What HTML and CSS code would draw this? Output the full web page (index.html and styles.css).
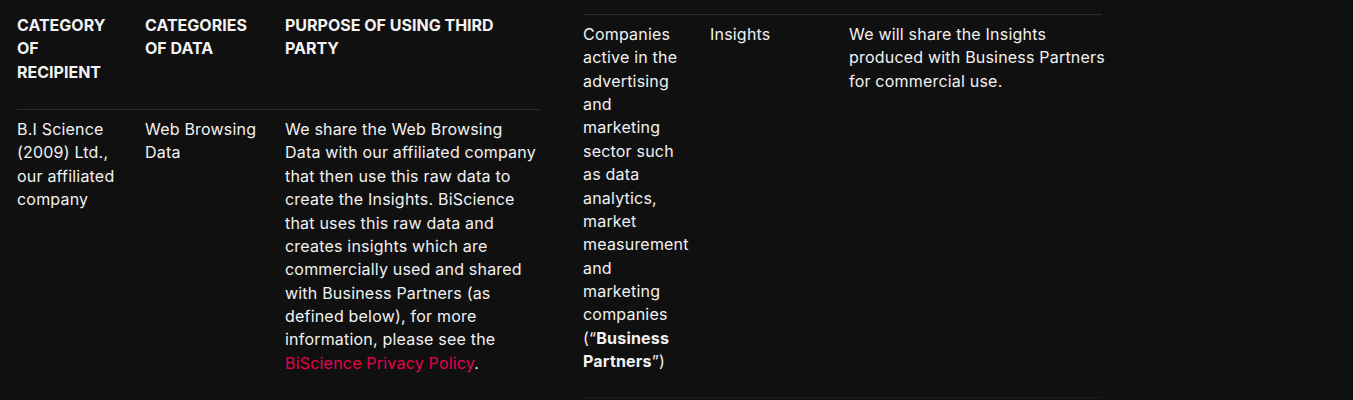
FILE: index.html
```html
<!DOCTYPE html>
<html lang="en">
<head>
<meta charset="utf-8">
<title>Third party recipients</title>
<link rel="stylesheet" href="styles.css">
</head>
<body>
<div class="page">
  <div class="sheet sheet-left">
    <div class="row row-head">
      <div class="cell c1">CATEGORY OF RECIPIENT</div>
      <div class="cell c2">CATEGORIES OF DATA</div>
      <div class="cell c3">PURPOSE OF USING THIRD PARTY</div>
    </div>
    <div class="row">
      <div class="cell c1">B.I Science (2009) Ltd., our affiliated company</div>
      <div class="cell c2">Web Browsing Data</div>
      <div class="cell c3">We share the Web Browsing Data with our affiliated company that then use this raw data to create the Insights. BiScience that uses this raw data and creates insights which are commercially used and shared with Business Partners (as defined below), for more information, please see the <a class="link" href="#">BiScience Privacy Policy</a>.</div>
    </div>
  </div>
  <div class="sheet sheet-right">
    <div class="row row-top row-last">
      <div class="cell c1">Companies active in the advertising and marketing sector such as data analytics, market measurement and marketing companies (“<strong>Business</strong><br><strong>Partners</strong>”)</div>
      <div class="cell c2">Insights</div>
      <div class="cell c3">We will share the Insights produced with Business Partners for commercial use.</div>
    </div>
  </div>
</div>
</body>
</html>
```

FILE: styles.css
```css
html, body {
  margin: 0;
  padding: 0;
  background: #101010;
}

body {
  font-family: "Inter", "Noto Sans", sans-serif;
  font-size: 16px;
  line-height: 23.36px;
  color: #f2f2f2;
}

.page {
  display: flex;
  align-items: flex-start;
  gap: 43px;
  padding-left: 17px;
}

.sheet-left {
  width: 523px;
  padding-top: 6px;
}

.sheet-right {
  width: 519px;
  padding-top: 14px;
}

.row {
  display: grid;
  border-bottom: 1px solid #2c2c2c;
}

.sheet-left .row {
  grid-template-columns: 128px 140px 255px;
}

.sheet-left .row:last-child {
  border-bottom: none;
}

.sheet-right .row {
  grid-template-columns: 127px 139px 253px;
}

.row-top {
  border-top: 1px solid #2c2c2c;
}

.row-last {
  border-bottom-color: #1c1c1c;
}

.cell {
  padding: 8px 20px 24px 0;
  letter-spacing: 0.2px;
}

.cell.c3 {
  padding-right: 0;
}

.sheet-right .cell.c3 {
  margin-right: -8px;
}

.row-head .cell {
  font-weight: 700;
  letter-spacing: 0;
  padding-bottom: 25px;
}

.link {
  color: #e8004f;
  text-decoration: none;
}

strong {
  font-weight: 700;
}
```
